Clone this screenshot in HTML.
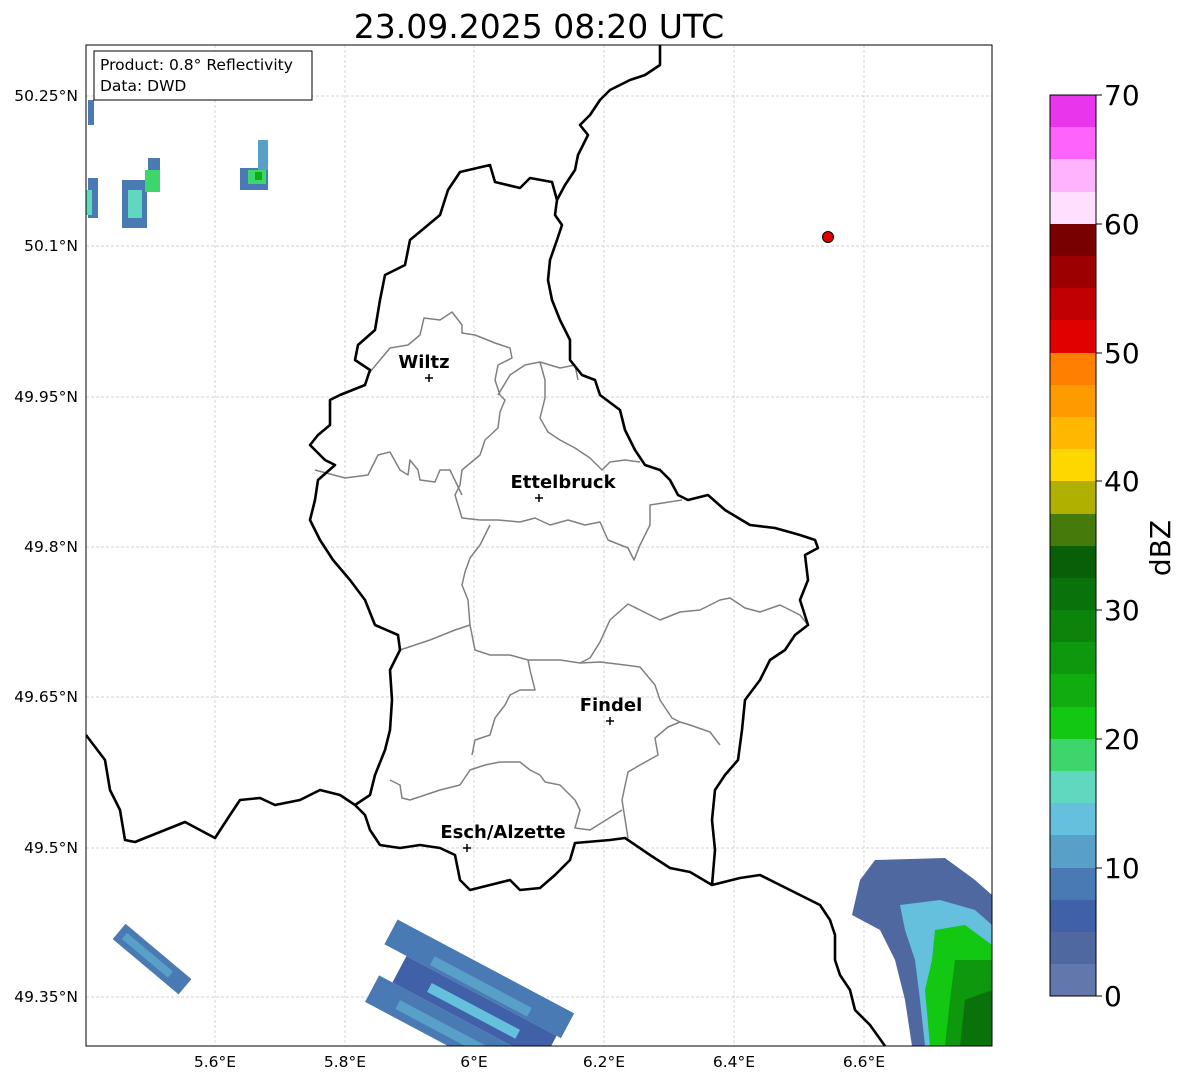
<!DOCTYPE html>
<html><head><meta charset="utf-8"><style>
html,body{margin:0;padding:0;background:#fff;}
svg{display:block;font-family:"DejaVu Sans","Liberation Sans",sans-serif;}
</style></head><body>
<svg width="1184" height="1081" viewBox="0 0 1184 1081" xmlns="http://www.w3.org/2000/svg">
<rect width="1184" height="1081" fill="#fff"/>
<text x="539" y="38" font-size="33" text-anchor="middle" fill="#000">23.09.2025 08:20 UTC</text>
<defs><clipPath id="c"><rect x="86" y="45" width="906" height="1001"/></clipPath></defs>
<g clip-path="url(#c)">
<g stroke="#c4c4c4" stroke-width="0.7" stroke-dasharray="3,2">
<line x1="215" y1="45" x2="215" y2="1046"/><line x1="345" y1="45" x2="345" y2="1046"/><line x1="474" y1="45" x2="474" y2="1046"/><line x1="604" y1="45" x2="604" y2="1046"/><line x1="734" y1="45" x2="734" y2="1046"/><line x1="864" y1="45" x2="864" y2="1046"/>
<line x1="86" y1="96" x2="992" y2="96"/><line x1="86" y1="246" x2="992" y2="246"/><line x1="86" y1="397" x2="992" y2="397"/><line x1="86" y1="547" x2="992" y2="547"/><line x1="86" y1="697" x2="992" y2="697"/><line x1="86" y1="848" x2="992" y2="848"/><line x1="86" y1="997" x2="992" y2="997"/>
</g>
<g>
<rect x="88" y="178" width="10" height="40" fill="#4a7ab4"/><rect x="86" y="190" width="6" height="25" fill="#60d8c0"/>
<rect x="88" y="100" width="6" height="25" fill="#4a7ab4"/>
<rect x="122" y="180" width="25" height="48" fill="#4a7ab4"/><rect x="128" y="190" width="14" height="28" fill="#60d8c0"/><rect x="145" y="170" width="15" height="22" fill="#3cd66c"/><rect x="148" y="158" width="12" height="12" fill="#4a7ab4"/>
<rect x="240" y="168" width="28" height="22" fill="#4a7ab4"/><rect x="248" y="170" width="18" height="14" fill="#3cd66c"/><rect x="255" y="172" width="7" height="8" fill="#10ac10"/><rect x="258" y="140" width="10" height="30" fill="#58a0c8"/>
</g>
<g>
<polygon points="875,860 945,858 975,880 992,895 992,1046 912,1046 905,1000 895,960 880,930 852,915 860,880" fill="#5068a0"/>
<polygon points="900,905 940,900 975,910 992,925 992,1046 925,1046 920,1000 915,960 905,930" fill="#64c0dc"/>
<polygon points="935,930 965,925 992,945 992,1046 930,1046 925,990 932,960" fill="#12c812"/>
<polygon points="955,960 992,960 992,1046 945,1046 950,1000" fill="#0e980e"/>
<polygon points="965,1000 992,990 992,1046 960,1046" fill="#0a720a"/>
</g>
<g transform="rotate(28 465 995)">
<rect x="370" y="960" width="200" height="28" fill="#4a7ab4"/>
<rect x="395" y="988" width="170" height="30" fill="#4060a8"/>
<rect x="380" y="1018" width="180" height="30" fill="#4a7ab4"/>
<rect x="420" y="975" width="110" height="10" fill="#58a0c8"/>
<rect x="430" y="1000" width="100" height="10" fill="#64c0dc"/>
<rect x="410" y="1030" width="120" height="10" fill="#58a0c8"/>
</g>
<g transform="rotate(40 150 960)">
<rect x="108" y="948" width="86" height="20" fill="#4a7ab4"/>
<rect x="115" y="954" width="60" height="8" fill="#58a0c8"/>
</g>
<g fill="none" stroke="#808080" stroke-width="1.5" stroke-linejoin="round">
<path d="M370,372 L390,348 L408,345 L420,335 L424,318 L440,320 L452,312 L462,325 L462,333 L475,335 L495,343 L510,348 L512,358 L498,365 L495,380 L500,395 L505,400 L500,412 L498,428 L485,440 L480,455 L462,470 L460,485 L455,495 L462,518 L480,520 L498,520 L520,522 L535,518 L550,525 L568,520 L585,525 L600,522 L608,540 L628,548 L634,560 L640,545 L650,525 L650,505 L682,500"/>
<path d="M315,470 L345,478 L368,475 L378,455 L390,452 L400,470 L408,475 L410,460 L418,470 L420,480 L435,482 L440,470 L450,470 L462,495"/>
<path d="M498,395 L510,375 L525,365 L540,362 L545,380 L545,398 L540,418 L548,432 L560,440 L575,448 L590,458 L602,470 L610,462 L625,460 L640,462"/>
<path d="M540,362 L560,368 L575,365 L578,380"/>
<path d="M490,525 L480,545 L470,558 L465,572 L462,585 L468,600 L470,625 L455,630 L430,640 L400,650"/>
<path d="M470,625 L475,650 L490,655 L510,655 L528,660 L560,660 L580,663 L590,658 L600,642 L610,620 L628,604 L640,610 L660,620 L680,612 L700,610 L720,600 L730,598 L745,608 L760,612 L780,605 L800,615 L808,625"/>
<path d="M580,663 L600,662 L625,665 L640,667 L655,685 L660,700 L672,718 L680,722 L668,727 L655,738 L658,755 L640,765 L628,772 L622,800 L628,838"/>
<path d="M528,660 L530,670 L535,690 L520,690 L510,695 L505,705 L495,718 L490,735 L475,740 L472,755"/>
<path d="M680,722 L690,725 L710,732 L720,745"/>
<path d="M390,780 L400,785 L402,798 L410,800 L425,795 L440,790 L460,785 L470,770 L485,765 L500,762 L520,762 L530,770 L540,775 L545,782 L560,785 L575,800 L580,810 L575,828 L590,830 L622,810"/>
</g>
<g fill="none" stroke="#000" stroke-width="2.6" stroke-linejoin="round">
<path d="M410,240 L440,215 L448,190 L460,172 L490,165 L495,182 L520,188 L530,178 L552,182 L557,200 L555,215 L562,225 L557,240 L550,260 L548,280 L552,300 L560,320 L570,340 L570,360 L582,375 L595,380 L600,395 L620,410 L625,430 L635,450 L645,465 L660,470 L670,480 L678,495 L688,500 L708,495 L725,510 L750,525 L775,528 L800,535 L815,540 L818,548 L805,555 L808,580 L800,600 L808,625 L795,635 L785,650 L770,660 L760,680 L745,700 L742,730 L738,760 L725,775 L715,790 L712,820 L715,850 L712,885 L690,872 L670,868 L650,855 L625,838 L610,840 L575,843 L570,860 L555,875 L540,888 L520,890 L510,880 L490,885 L470,890 L460,880 L455,855 L440,848 L420,845 L400,848 L380,845 L370,830 L365,815 L355,805 L370,795 L375,775 L385,750 L390,730 L392,700 L390,670 L400,650 L398,635 L375,625 L365,600 L350,580 L333,560 L320,540 L310,520 L315,500 L318,480 L335,465 L325,460 L310,445 L318,435 L330,425 L330,400 L340,395 L365,385 L370,370 L355,360 L358,345 L375,330 L380,300 L385,275 L405,265 Z"/>
<path d="M86,735 L105,760 L110,790 L120,810 L125,840 L135,842 L165,830 L185,822 L215,838 L230,815 L240,800 L260,798 L275,805 L300,800 L320,790 L340,795 L355,805"/>
<path d="M712,885 L740,878 L760,875 L780,885 L800,895 L820,905 L830,920 L835,935 L835,960 L840,975 L850,990 L855,1010 L870,1025 L885,1046"/>
<path d="M557,200 L565,185 L575,170 L578,155 L588,135 L580,125 L590,115 L600,100 L610,90 L630,80 L645,75 L660,65 L660,45"/>
</g>
<circle cx="828" cy="237" r="5.5" fill="#e00000" stroke="#000" stroke-width="1"/>
<g font-size="18" font-weight="bold" text-anchor="middle" fill="#000">
<text x="424" y="368">Wiltz</text>
<text x="563" y="488">Ettelbruck</text>
<text x="611" y="711">Findel</text>
<text x="503" y="838">Esch/Alzette</text>
</g>
<g stroke="#000" stroke-width="1.5">
<path d="M425,378h8M429,374v8"/><path d="M535,498h8M539,494v8"/><path d="M606,721h8M610,717v8"/><path d="M463,848h8M467,844v8"/>
</g>
<rect x="94" y="51" width="218" height="49" fill="#fff" stroke="#000" stroke-width="1"/>
<text x="100" y="70" font-size="15.5">Product: 0.8° Reflectivity</text>
<text x="100" y="91" font-size="15.5">Data: DWD</text>
</g>
<rect x="86" y="45" width="906" height="1001" fill="none" stroke="#000" stroke-width="1"/>
<g font-size="15.5" fill="#000">
<g text-anchor="middle">
<text x="215" y="1067">5.6°E</text><text x="345" y="1067">5.8°E</text><text x="474" y="1067">6°E</text><text x="604" y="1067">6.2°E</text><text x="734" y="1067">6.4°E</text><text x="864" y="1067">6.6°E</text>
</g>
<g text-anchor="end">
<text x="78" y="101">50.25°N</text><text x="78" y="251">50.1°N</text><text x="78" y="402">49.95°N</text><text x="78" y="552">49.8°N</text><text x="78" y="702">49.65°N</text><text x="78" y="853">49.5°N</text><text x="78" y="1002">49.35°N</text>
</g>
</g>
<g>
<rect x="1050" y="95" width="46" height="33" fill="#e935ec"/>
<rect x="1050" y="127" width="46" height="33" fill="#fe64fc"/>
<rect x="1050" y="159" width="46" height="33" fill="#feb4fc"/>
<rect x="1050" y="192" width="46" height="33" fill="#fee0fe"/>
<rect x="1050" y="224" width="46" height="33" fill="#780000"/>
<rect x="1050" y="256" width="46" height="33" fill="#9c0000"/>
<rect x="1050" y="288" width="46" height="33" fill="#c00000"/>
<rect x="1050" y="320" width="46" height="33" fill="#e00000"/>
<rect x="1050" y="353" width="46" height="33" fill="#ff7f00"/>
<rect x="1050" y="385" width="46" height="33" fill="#ff9a00"/>
<rect x="1050" y="417" width="46" height="33" fill="#ffb700"/>
<rect x="1050" y="449" width="46" height="33" fill="#fed700"/>
<rect x="1050" y="481" width="46" height="33" fill="#b0b000"/>
<rect x="1050" y="514" width="46" height="33" fill="#467a0a"/>
<rect x="1050" y="546" width="46" height="33" fill="#085f08"/>
<rect x="1050" y="578" width="46" height="33" fill="#0a720a"/>
<rect x="1050" y="610" width="46" height="33" fill="#0c840c"/>
<rect x="1050" y="642" width="46" height="33" fill="#0e980e"/>
<rect x="1050" y="674" width="46" height="33" fill="#10ac10"/>
<rect x="1050" y="707" width="46" height="33" fill="#12c812"/>
<rect x="1050" y="739" width="46" height="33" fill="#3cd66c"/>
<rect x="1050" y="771" width="46" height="33" fill="#60d8c0"/>
<rect x="1050" y="803" width="46" height="33" fill="#64c0dc"/>
<rect x="1050" y="835" width="46" height="33" fill="#58a0c8"/>
<rect x="1050" y="868" width="46" height="33" fill="#4a7ab4"/>
<rect x="1050" y="900" width="46" height="33" fill="#4060a8"/>
<rect x="1050" y="932" width="46" height="33" fill="#5068a0"/>
<rect x="1050" y="964" width="46" height="32" fill="#6278ac"/>
<rect x="1050" y="95" width="46" height="901" fill="none" stroke="#000" stroke-width="1"/>
<g stroke="#000" stroke-width="1"><path d="M1096,95h6M1096,224h6M1096,353h6M1096,481h6M1096,610h6M1096,739h6M1096,868h6M1096,996h6"/></g>
<g font-size="28" fill="#000">
<text x="1104" y="105">70</text><text x="1104" y="234">60</text><text x="1104" y="363">50</text><text x="1104" y="491">40</text><text x="1104" y="620">30</text><text x="1104" y="749">20</text><text x="1104" y="878">10</text><text x="1104" y="1006">0</text>
</g>
<text transform="translate(1170,548) rotate(-90)" font-size="28" text-anchor="middle">dBZ</text>
</g>
</svg>
</body></html>
